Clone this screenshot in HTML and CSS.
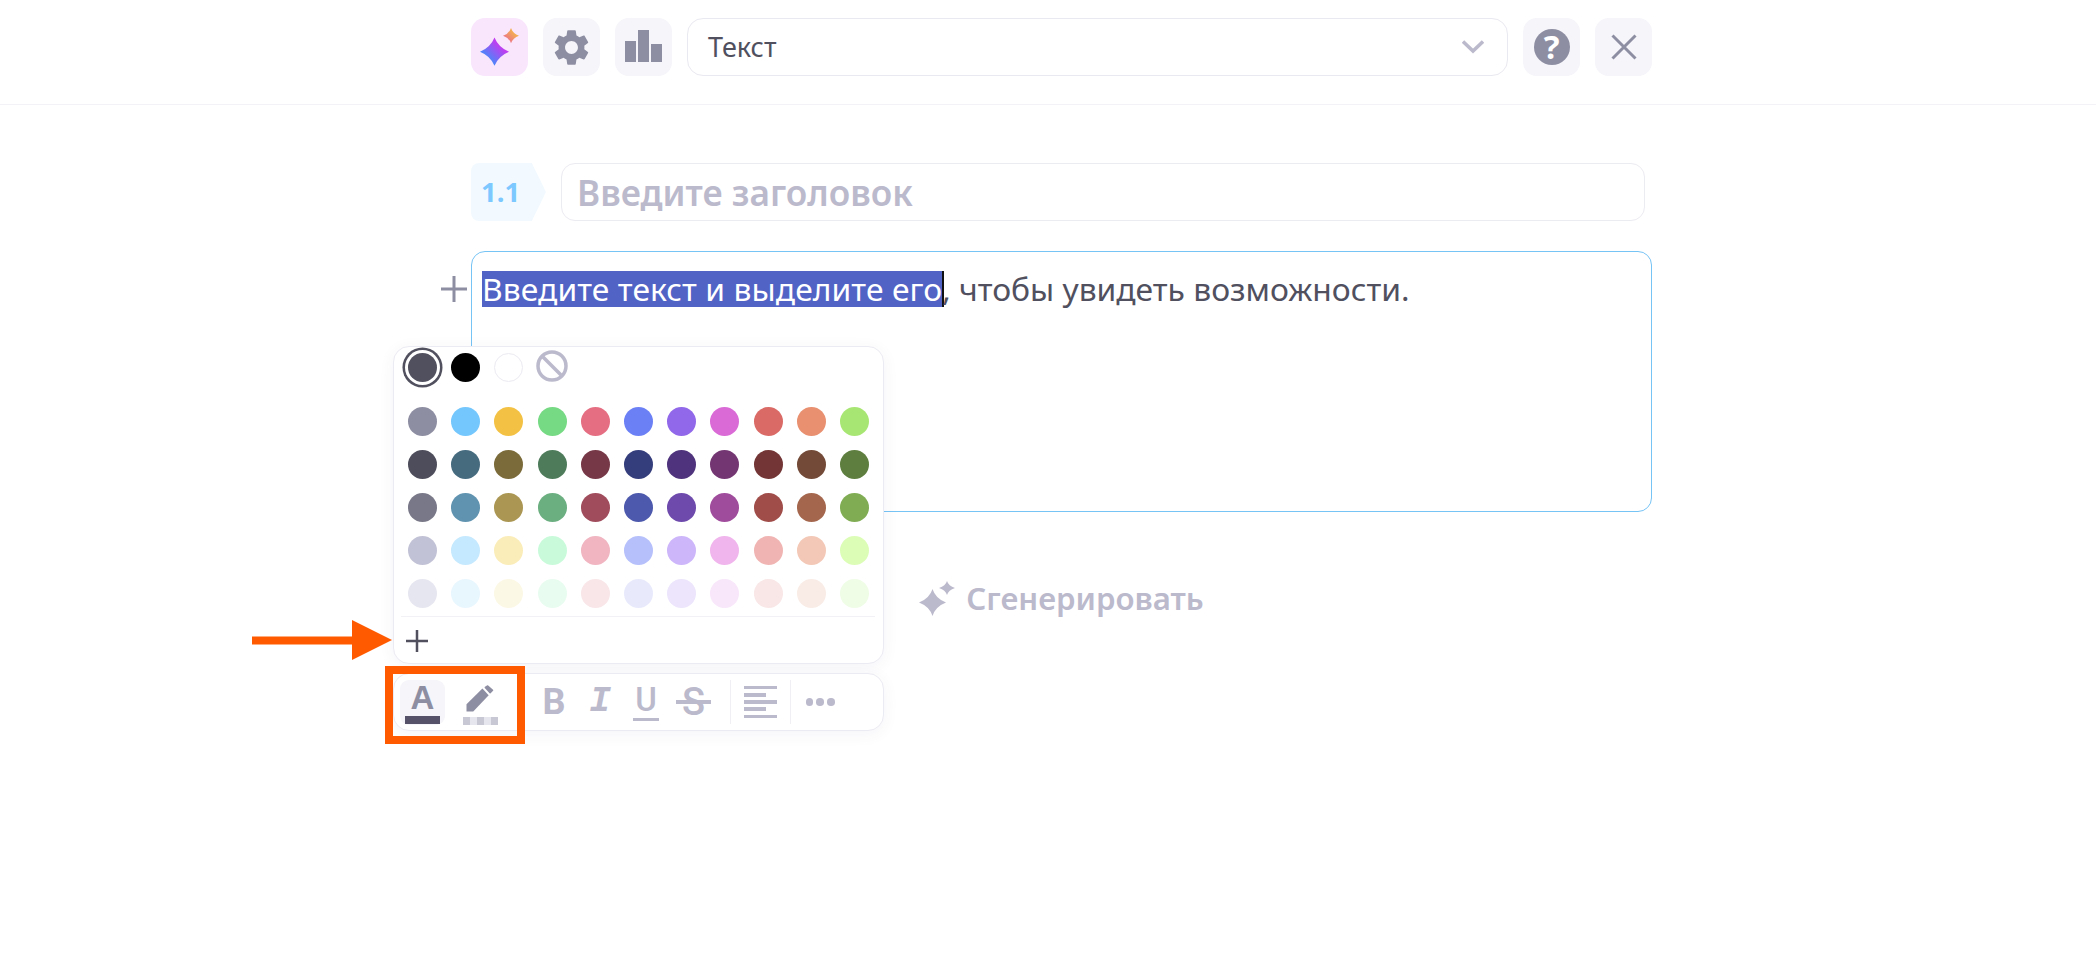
FILE: index.html
```html
<!DOCTYPE html>
<html lang="ru">
<head>
<meta charset="UTF-8">
<meta name="viewport" content="width=device-width, initial-scale=1.0">
<title>Редактор</title>

<link rel="stylesheet" href="styles.css">
</head>

<body>

<header class="topbar">
  <div class="topbar-row">
    <button class="tool tool-ai">
      <svg width="57" height="58" viewBox="0 0 57 58">
        <defs>
          <linearGradient id="bigStar" x1="0" y1="1" x2="1" y2="0">
            <stop offset="0.2" stop-color="#3d8ffb"/>
            <stop offset="0.7" stop-color="#c03df0"/>
          </linearGradient>
          <linearGradient id="smallStar" x1="0" y1="1" x2="1" y2="0">
            <stop offset="0.15" stop-color="#ea6a90"/>
            <stop offset="0.85" stop-color="#f6c23e"/>
          </linearGradient>
        </defs>
        <path fill="url(#bigStar)" d="M23.5 19.5Q27.500 29.500 38 33.700Q27.500 38 23.5 47.700Q19.500 38 9 33.700Q19.500 29.500 23.5 19.5Z"/>
        <path fill="url(#smallStar)" d="M40 10Q42 15.700 48 17.700Q42 19.700 40 25.300Q38 19.700 32 17.700Q38 15.700 40 10Z"/>
      </svg>
    </button>
    <button class="tool">
      <svg width="43" height="43" viewBox="0 0 24 24" fill="#8e8ea3"><path d="M19.14 12.94c.04-.3.06-.61.06-.94 0-.32-.02-.64-.07-.94l2.03-1.58c.18-.14.23-.41.12-.61l-1.92-3.32c-.12-.22-.37-.29-.59-.22l-2.39.96c-.5-.38-1.03-.7-1.62-.94l-.36-2.54c-.04-.24-.24-.41-.48-.41h-3.84c-.24 0-.43.17-.47.41l-.36 2.54c-.59.24-1.13.57-1.62.94l-2.39-.96c-.22-.08-.47 0-.59.22L2.74 8.87c-.12.21-.08.47.12.61l2.03 1.58c-.05.3-.09.63-.09.94s.02.64.07.94l-2.03 1.58c-.18.14-.23.41-.12.61l1.92 3.32c.12.22.37.29.59.22l2.39-.96c.5.38 1.03.7 1.62.94l.36 2.54c.05.24.24.41.48.41h3.84c.24 0 .44-.17.47-.41l.36-2.54c.59-.24 1.13-.56 1.62-.94l2.39.96c.22.08.47 0 .59-.22l1.92-3.32c.12-.22.07-.47-.12-.61l-2.01-1.58zM12 15.6c-1.98 0-3.6-1.62-3.6-3.6s1.62-3.6 3.6-3.6 3.6 1.62 3.6 3.6-1.62 3.6-3.6 3.6z"/></svg>
    </button>
    <button class="tool">
      <svg width="57" height="58" viewBox="0 0 57 58" fill="#8e8ea3">
        <rect x="10" y="23" width="11" height="21"/>
        <rect x="23" y="12" width="11" height="32"/>
        <rect x="36" y="26" width="11" height="18"/>
      </svg>
    </button>
    <div class="select">
      <span>Текст</span>
      <svg width="22" height="14" viewBox="0 0 22 14" fill="none" stroke="#bbb9cc" stroke-width="3.500"><path d="M1 1.500L11 11L21 1.500"/></svg>
    </div>
    <button class="tool">
      <span class="help">?</span>
    </button>
    <button class="tool">
      <svg width="26" height="26" viewBox="0 0 26 26" fill="none" stroke="#8e8ea3" stroke-width="3"><path d="M1.500 1.500L24.500 24.500M24.500 1.500L1.500 24.500"/></svg>
    </button>
  </div>
</header>

<main class="content">
  <div class="title-row">
    <div class="badge">1.1</div>
    <div class="title-input">Введите заголовок</div>
  </div>

  <div class="editor">
    <svg class="add-block" width="26" height="26" viewBox="0 0 26 26" fill="none" stroke="#8e8ea3" stroke-width="3"><path d="M13 0V26M0 13H26"/></svg>
    <span class="picked">Введите текст и выделите его</span>, чтобы увидеть возможности.
  </div>

  <div class="generate">
    <svg width="36" height="35" viewBox="0 0 36 35" fill="#bbb9cc">
      <path d="M13.500 8Q16.500 17.500 27 21.500Q16.500 25.500 13.500 35Q10.500 25.500 0 21.500Q10.500 17.500 13.500 8Z"/>
      <path d="M28 0Q29.500 5 36 7Q29.500 9 28 14Q26.500 9 20 7Q26.500 5 28 0Z"/>
    </svg>
    Сгенерировать
  </div>
</main>

<!-- всплывающая панель цветов -->
<div class="floating">
  <div class="palette">
    <div class="swatches swatches-top">
      <div class="swatch swatch-current"></div>
      <div class="swatch swatch-black"></div>
      <div class="swatch swatch-white"></div>
      <svg class="swatch-none" width="32" height="32" viewBox="0 0 32 32" fill="none" stroke="#bbb9cc" stroke-width="3.500">
        <circle cx="16" cy="16" r="14"/>
        <path d="M6 6L26 26"/>
      </svg>
    </div>
    <div class="swatches" id="swatches"></div>
    <div class="palette-foot">
      <svg width="22" height="22" viewBox="0 0 22 22" fill="none" stroke="#50505f" stroke-width="2.500"><path d="M11 0V22M0 11H22"/></svg>
    </div>
  </div>

  <div class="format-bar">
    <div class="fmt fmt-on">
      <span class="letter-a">A</span>
      <span class="color-line"></span>
    </div>
    <div class="fmt fmt-pen">
      <svg width="30" height="29" viewBox="0 0 30 29" fill="#8e8ea3">
        <path d="M1 27.500V20L17.500 3.500L24 10.500L8 27.500Z"/>
        <path stroke="#8e8ea3" stroke-width="1.500" stroke-linejoin="round" d="M20.500 2.500L23 1L28 5.500L25.500 8Z"/>
      </svg>
      <span class="color-line color-line-empty"></span>
    </div>
    <div class="fmt fmt-b">B</div>
    <div class="fmt fmt-i">I</div>
    <div class="fmt fmt-u"><span>U</span></div>
    <div class="fmt fmt-s"><span>S</span></div>
    <div class="sep"></div>
    <div class="align">
      <span></span>
      <span class="short"></span>
      <span></span>
      <span class="short"></span>
      <span></span>
    </div>
    <div class="sep"></div>
    <div class="more">
      <span></span>
      <span></span>
      <span></span>
    </div>
  </div>
</div>

<!-- пометки поверх скриншота -->
<svg class="mark-arrow" width="141" height="41" viewBox="0 0 141 41" fill="#ff5a00">
  <path d="M0 16.500H100V0L140 20L100 40V24.500H0Z"/>
</svg>
<div class="mark-box"></div>

<script>
const colors = [
  "#8e8ea3", "#73c7fd", "#f3c244", "#76d983", "#e56e82", "#6c80f6", "#9168e9", "#d96ad6", "#da6a66", "#e89070", "#a8e673",
  "#4d4d5c", "#466b7f", "#7b6b3a", "#4e7c5b", "#763746", "#353e7c", "#4f337c", "#733672", "#733535", "#734a37", "#5d7e3e",
  "#787888", "#5f93b0", "#ab9753", "#6bae80", "#a04c5c", "#4c59ac", "#6d4aac", "#a04c9c", "#a04d4a", "#a4674d", "#80ad54",
  "#c2c2d6", "#c5e9fe", "#fbedb9", "#c9fbdb", "#f0b5c1", "#b6c0fb", "#cdb6fa", "#f0b5ec", "#f0b5b3", "#f3c8b6", "#dcfdb6",
  "#e6e6f0", "#e8f6fe", "#fcf8e6", "#e9fcf0", "#f9e6e9", "#e8eafc", "#ece5fc", "#f8e6fa", "#f9e6e6", "#f9ece6", "#effde6"
];

const grid = document.getElementById("swatches");
colors.forEach(c => {
  const dot = document.createElement("div");
  dot.className = "swatch";
  dot.style.background = c;
  grid.appendChild(dot);
});
</script>

</body>
</html>
```

FILE: styles.css
```css
body {
  margin: 0;
  font-family: "Noto Sans", "Open Sans", sans-serif;
  background: white;
  color: #50505f;
  position: relative;
  height: 968px;
  overflow: hidden;
}

.topbar {
  height: 104px;
  border-bottom: 1px solid #f3f3f7;
  box-sizing: content-box;
}

.topbar-row {
  width: 1181px;
  margin-left: 471px;
  padding-top: 18px;
  display: flex;
  gap: 15px;
}

.tool {
  width: 57px;
  height: 58px;
  flex: none;
  padding: 0;
  border: none;
  border-radius: 14px;
  background: #f5f5fa;
  display: flex;
  align-items: center;
  justify-content: center;
}

.tool-ai {
  background: #f9e6fd;
}

.select {
  flex: 1;
  height: 58px;
  box-sizing: border-box;
  border: 1px solid #e9e9f1;
  border-radius: 16px;
  padding: 0 23px 0 20px;
  display: flex;
  align-items: center;
  justify-content: space-between;
  font-size: 27px;
}

.select span {
  margin-top: -2px;
}

.help {
  width: 36px;
  height: 36px;
  border-radius: 50%;
  background: #8e8ea3;
  color: white;
  font-family: "Noto Sans", sans-serif;
  font-size: 33px;
  font-weight: 700;
  line-height: 36px;
  text-align: center;
}

.content {
  width: 1181px;
  margin-left: 471px;
  padding-top: 58px;
}

.title-row {
  display: flex;
  gap: 15px;
  height: 58px;
}

.badge {
  width: 75px;
  flex: none;
  box-sizing: border-box;
  padding-left: 10px;
  background: #f2faff;
  border-radius: 8px 0 0 8px;
  clip-path: polygon(0 0, 81% 0, 100% 50%, 81% 100%, 0 100%);
  color: #7cc8ff;
  font-size: 27.5px;
  font-weight: 700;
  line-height: 58px;
}

.title-input {
  flex: 1;
  margin-right: 7px;
  box-sizing: border-box;
  border: 1px solid #ebebf2;
  border-radius: 14px;
  padding-left: 15px;
  color: #bbb9cc;
  font-size: 35.2px;
  font-weight: 600;
  line-height: 56px;
}

.editor {
  position: relative;
  height: 261px;
  margin-top: 30px;
  box-sizing: border-box;
  border: 1px solid #76c3f5;
  border-radius: 14px;
  padding: 18px 10px;
  font-size: 31.8px;
  line-height: 37px;
}

.add-block {
  position: absolute;
  left: -31px;
  top: 24px;
}

.picked {
  display: inline-block;
  line-height: 36px;
  height: 36px;
  margin-right: -2px;
  letter-spacing: 0.09px;
  background: #5163c5;
  color: white;
  border-right: 2px solid #111;
}

.generate {
  margin-top: 66px;
  display: flex;
  align-items: center;
  justify-content: center;
  gap: 11px;
  height: 40px;
  color: #bbb9cc;
  font-size: 31.2px;
  font-weight: 600;
}

.floating {
  position: absolute;
  left: 393px;
  top: 346px;
  width: 491px;
  display: flex;
  flex-direction: column;
  gap: 9px;
}

.palette,
.format-bar {
  box-sizing: border-box;
  background: white;
  border: 1px solid #ebebf3;
  border-radius: 16px;
  box-shadow: 0 3px 16px rgba(70, 70, 130, 0.06);
}

.palette {
  height: 318px;
  padding: 6px 0 0 14px;
}

.swatches {
  display: grid;
  grid-template-columns: repeat(11, 29px);
  column-gap: 14.2px;
  row-gap: 14px;
}

.swatches-top {
  height: 54px;
  align-items: start;
}

.swatch {
  width: 29px;
  height: 29px;
  border-radius: 50%;
}

.swatch-current {
  background: #50505f;
  box-shadow: 0 0 0 3px white, 0 0 0 5.5px #50505f;
}

.swatch-black {
  background: black;
}

.swatch-white {
  background: white;
  box-sizing: border-box;
  border: 1px solid #ebebf2;
}

.swatch-none {
  margin: -3px 0 0 -1.5px;
}

.palette-foot {
  margin: 8px 8px 0 -7px;
  height: 47px;
  border-top: 1px solid #f1f1f6;
  display: flex;
  align-items: center;
  padding-left: 5px;
}

.format-bar {
  height: 58px;
  padding: 6px;
  display: flex;
  align-items: center;
}

.fmt {
  width: 46px;
  height: 45px;
  flex: none;
  display: flex;
  flex-direction: column;
  align-items: center;
  justify-content: center;
  color: #bbb9cc;
  font-family: Roboto, sans-serif;
  font-weight: 700;
  line-height: 1;
}

.fmt-on {
  width: 45px;
  background: #f5f5fa;
  border-radius: 9px;
  justify-content: flex-start;
}

.letter-a {
  color: #8e8ea3;
  font-family: "Liberation Sans", sans-serif;
  font-size: 33px;
  height: 36px;
  line-height: 36px;
}

.color-line {
  width: 35px;
  height: 8px;
  background: #55526a;
  flex: none;
}

.color-line-empty {
  margin-top: 4px;
  background: repeating-linear-gradient(90deg, #c8c8d4 0 7px, #e6e6ee 7px 14px);
}

.fmt-pen {
  margin-left: 12px;
  justify-content: flex-start;
  padding-top: 5px;
  height: 40px;
}

.fmt-b {
  margin-left: 28px;
  font-size: 36px;
}

.fmt-i {
  font-family: "Liberation Mono", monospace;
  font-style: italic;
  font-size: 36px;
}

.fmt-u span {
  font-size: 33px;
  font-weight: 500;
  border-bottom: 3.500px solid #bbb9cc;
  padding: 0 2px 2px;
}

.fmt-s {
  margin-left: 1.5px;
}

.fmt-s span {
  position: relative;
  font-size: 38px;
  font-weight: 500;
  padding: 0 6px;
}

.fmt-s span::after {
  content: "";
  position: absolute;
  left: 0;
  right: 0;
  top: 50%;
  height: 4px;
  margin-top: -2px;
  background: #bbb9cc;
}

.sep {
  width: 1px;
  height: 44px;
  flex: none;
  margin: 0 13px;
  background: #efeff4;
}

.align {
  width: 33px;
  display: flex;
  flex-direction: column;
  gap: 3.600px;
}

.align span {
  height: 3.700px;
  background: #bbb9cc;
}

.align .short {
  width: 22px;
}

.more {
  margin-left: 2px;
  display: flex;
  gap: 3.300px;
}

.more span {
  width: 7.500px;
  height: 7.500px;
  border-radius: 50%;
  background: #bbb9cc;
}

.mark-arrow {
  position: absolute;
  left: 252px;
  top: 620px;
}

.mark-box {
  position: absolute;
  left: 385px;
  top: 666px;
  width: 140px;
  height: 78px;
  box-sizing: border-box;
  border: 8px solid #ff5a00;
}
```
